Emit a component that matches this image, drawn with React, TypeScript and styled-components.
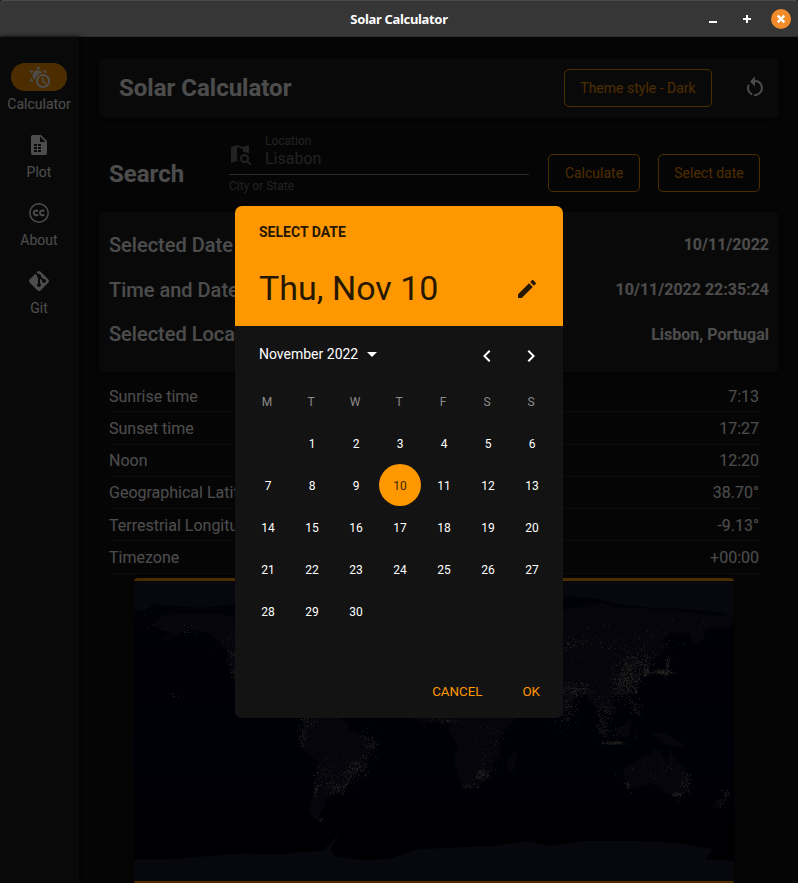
import React from "react";
import styled, { createGlobalStyle } from "styled-components";

const accent = "#ff9800";

const GlobalStyle = createGlobalStyle`
  *, *::before, *::after { box-sizing: border-box; }
  html, body { margin: 0; height: 100%; background: #121212; }
  body { overflow: hidden; font-family: Roboto, sans-serif; color: #fff; }
  button { font-family: inherit; padding: 0; background: none; border: 0; color: inherit; }
  h1, h2, p { margin: 0; }
`;

const Window = styled.div`
  width: 798px;
  height: 883px;
  display: flex;
  flex-direction: column;
  overflow: hidden;
`;

const TitleBar = styled.header`
  flex: none;
  height: 37px;
  display: grid;
  grid-template-columns: 1fr auto 1fr;
  align-items: center;
  background: #363636;
  border-top: 1px solid #4b4b4b;
  border-bottom: 1px solid #2b2b2b;
  border-radius: 3px 3px 0 0;
  padding-right: 7px;
`;

const WindowTitle = styled.span`
  grid-column: 2;
  font: 700 13px/18px "Noto Sans", sans-serif;
  letter-spacing: -0.33px;
  padding-left: 7px;
`;

const WindowControls = styled.div`
  display: flex;
  justify-content: flex-end;
  align-items: center;
  gap: 14px;
`;

const ControlButton = styled.button<{ $close?: boolean }>`
  width: 20px;
  height: 20px;
  border-radius: 50%;
  display: grid;
  place-items: center;
  background: ${(p) => (p.$close ? "#f28c2b" : "transparent")};
`;

const AppBody = styled.div`
  position: relative;
  flex: 1;
  min-height: 0;
  display: flex;
  background: #121212;
`;

const NavRail = styled.nav`
  flex: none;
  width: 79px;
  display: flex;
  flex-direction: column;
  gap: 12px;
  padding-top: 26px;
  background: #202020;
  box-shadow: 1px 0 5px rgba(0, 0, 0, 0.8);
`;

const NavItem = styled.button`
  height: 56px;
  display: flex;
  flex-direction: column;
  align-items: center;
  gap: 5px;
  padding-right: 1px;
  font-size: 14px;
  line-height: 16px;
`;

const NavPill = styled.span<{ $active?: boolean }>`
  width: 56px;
  height: 28px;
  flex: none;
  border-radius: 14px;
  display: grid;
  place-items: center;
  background: ${(p) => (p.$active ? accent : "transparent")};
`;

const Main = styled.main`
  flex: 1;
  min-width: 0;
  display: flex;
  flex-direction: column;
  padding: 21px 19px 0 20px;
`;

const Card = styled.section`
  flex: none;
  background: #202020;
  border-radius: 6px;
  box-shadow: 0 1px 8px rgba(0, 0, 0, 0.75);
`;

const HeaderCard = styled(Card)`
  height: 60px;
  display: flex;
  align-items: center;
  padding: 0 12px 0 20px;
`;

const Heading = styled.h1`
  flex: 1;
  font-size: 24px;
  line-height: 28px;
  font-weight: 700;
`;

const OutlineButton = styled.button<{ $width: number }>`
  flex: none;
  width: ${(p) => p.$width}px;
  height: 38px;
  border: 1.5px solid ${accent};
  border-radius: 5px;
  color: ${accent};
  font-size: 14px;
`;

const IconButton = styled.button<{ $margin?: string }>`
  display: grid;
  place-items: center;
  width: 24px;
  height: 24px;
  margin: ${(p) => p.$margin ?? "0"};
`;

const SearchRow = styled.section`
  flex: none;
  height: 94px;
  display: flex;
  align-items: flex-start;
  padding: 36px 19px 0 10px;
`;

const SearchTitle = styled.h2`
  width: 120px;
  font-size: 24px;
  line-height: 28px;
  margin-top: 6px;
`;

const Field = styled.div`
  width: 300px;
  height: 58px;
  margin: -20px 19px 0 0;
  color: #727272;
  font-size: 12px;
  line-height: 14px;
`;

const FieldInput = styled.div`
  display: flex;
  height: 41px;
  border-bottom: 1px solid #909090;
  margin-bottom: 4px;
`;

const FieldIcon = styled.span`
  width: 36px;
  padding-top: 8px;
`;

const FieldValue = styled.p`
  font-size: 16px;
  line-height: 19px;
  margin-top: 1px;
`;

const ButtonGroup = styled.div`
  display: flex;
  gap: 18px;
`;

const InfoCard = styled(Card)`
  height: 160px;
  padding: 10.5px 10px;
`;

const InfoRow = styled.div`
  height: 44.7px;
  display: flex;
  align-items: center;
  justify-content: space-between;
  font-size: 20px;
  font-weight: 500;
`;

const InfoValue = styled.strong`
  font-size: 16px;
  font-weight: 700;
`;

const DataList = styled.div`
  flex: none;
  height: 193.5px;
  margin: 8px 19px 0 10px;
  display: flex;
  flex-direction: column;
`;

const DataRow = styled.div`
  flex: 1;
  display: flex;
  justify-content: space-between;
  align-items: center;
  border-bottom: 1px solid #2b2b2b;
  font-size: 16px;
  padding: 1px 1px 0 0;
`;

const MapFrame = styled.div`
  flex: none;
  width: 600px;
  height: 306px;
  margin: 4.5px 0 0 35px;
  background: #00001b;
  border-top: 3px solid ${accent};
  border-bottom: 3px solid ${accent};
  border-radius: 4px;
  box-shadow: 0 1px 8px rgba(0, 0, 0, 0.6);
  overflow: hidden;

  svg { display: block; }
`;

const Scrim = styled.div`
  position: absolute;
  inset: 0;
  display: flex;
  justify-content: center;
  align-items: flex-start;
  padding-top: 169px;
  background: rgba(0, 0, 0, 0.7);
`;

const Dialog = styled.section`
  width: 328px;
  height: 512px;
  display: flex;
  flex-direction: column;
  border-radius: 7px;
  overflow: hidden;
  background: #131313;
`;

const DialogHeader = styled.header`
  flex: none;
  height: 120px;
  padding: 18px 24px 0;
  background: ${accent};
  color: #261700;
`;

const Overline = styled.p`
  font-size: 14px;
  line-height: 16px;
  font-weight: 700;
`;

const DateLine = styled.div`
  display: flex;
  align-items: center;
  justify-content: space-between;
  margin-top: 28px;
  font-size: 34px;
  line-height: 40px;
`;

const MonthBar = styled.div`
  flex: none;
  height: 54px;
  display: flex;
  align-items: flex-start;
  padding: 18px 20px 0 24px;
`;

const MonthPicker = styled.button`
  flex: 1;
  display: flex;
  align-items: center;
  gap: 9px;
  height: 20px;
  font-size: 14px;
`;

const MonthArrows = styled.div`
  display: flex;
  gap: 20px;
`;

const Week = styled.div`
  flex: none;
  height: 42px;
  display: grid;
  grid-template-columns: repeat(7, 44px);
  justify-items: center;
  align-items: center;
  padding-left: 10px;
  font-size: 12px;
`;

const WeekHeader = styled(Week)`
  color: #8b8b8b;
  padding: 2px 0 0 10px;
  width: 318px;
`;

const Day = styled.span<{ $selected?: boolean }>`
  width: 42px;
  height: 42px;
  border-radius: 50%;
  display: grid;
  place-items: center;
  padding: 2px 0 0 0;
  margin-left: 2px;
  background: ${(p) => (p.$selected ? accent : "transparent")};
  color: ${(p) => (p.$selected ? "#3d2500" : "#fff")};
`;

const Actions = styled.footer`
  flex: 1;
  display: flex;
  justify-content: flex-end;
  align-items: flex-end;
  gap: 40px;
  padding: 0 23px 19px;
  color: ${accent};
  font-size: 14px;
`;

const Icon = ({ d, size = 24 }: { d: string; size?: number }) => (
  <svg width={size} height={size} viewBox="0 0 24 24" fill="currentColor" fillRule="evenodd">
    <path d={d} />
  </svg>
);

const paths = {
  table:
    "M6 2C4.9 2 4 2.9 4 4V20C4 21.1 4.9 22 6 22H18C19.1 22 20 21.1 20 20V8L14 2ZM13 3.5L18.5 9H13ZM7 11H10V13H7ZM11 11H14V13H11ZM7 14H10V16H7ZM11 14H14V16H11ZM7 17H10V19H7ZM11 17H14V19H11Z",
  git: "M2.6,10.59L8.38,4.8L10.07,6.5C9.83,7.35 10.22,8.28 11,8.73V14.27C10.4,14.61 10,15.26 10,16A2,2 0 0,0 12,18A2,2 0 0,0 14,16C14,15.26 13.6,14.61 13,14.27V9.41L15.07,11.5C15,11.65 15,11.82 15,12A2,2 0 0,0 17,14A2,2 0 0,0 19,12A2,2 0 0,0 17,10C16.82,10 16.65,10 16.5,10.07L13.93,7.5C14.19,6.57 13.71,5.55 12.78,5.16C12.35,5 11.9,4.96 11.5,5.07L9.8,3.38L10.59,2.6C11.37,1.81 12.63,1.81 13.41,2.6L21.4,10.59C22.19,11.37 22.19,12.63 21.4,13.41L13.41,21.4C12.63,22.19 11.37,22.19 10.59,21.4L2.6,13.41C1.81,12.63 1.81,11.37 2.6,10.59Z",
  restart:
    "M12,4C14.1,4 16.1,4.8 17.6,6.3C20.7,9.4 20.7,14.5 17.6,17.6C15.8,19.5 13.3,20.2 10.9,19.9L11.4,17.9C13.1,18.1 14.9,17.5 16.2,16.2C18.5,13.9 18.5,10.1 16.2,7.7C15.1,6.6 13.5,6 12,6V10.6L7,5.6L12,0.6V4M6.3,17.6C3.7,15 3.3,11 5.1,7.9L6.6,9.4C5.5,11.6 5.9,14.4 7.8,16.2C8.3,16.7 8.9,17.1 9.6,17.4L9,19.4C8,19 7.1,18.4 6.3,17.6Z",
  pencil:
    "M20.71,7.04C21.1,6.65 21.1,6 20.71,5.63L18.37,3.29C18,2.9 17.35,2.9 16.96,3.29L15.12,5.12L18.87,8.87M3,17.25V21H6.75L17.81,9.93L14.06,6.18L3,17.25Z",
  left: "M15.41,16.58L10.83,12L15.41,7.41L14,6L8,12L14,18L15.41,16.58Z",
  right: "M8.59,16.58L13.17,12L8.59,7.41L10,6L16,12L10,18L8.59,16.58Z",
  mapSearch:
    "M15.5,12C18,12 20,14 20,16.5C20,17.38 19.75,18.21 19.31,18.9L22.39,22L21,23.39L17.88,20.32C17.19,20.75 16.37,21 15.5,21C13,21 11,19 11,16.5C11,14 13,12 15.5,12ZM15.5,14A2.5,2.5 0 0,0 13,16.5A2.5,2.5 0 0,0 15.5,19A2.5,2.5 0 0,0 18,16.5A2.5,2.5 0 0,0 15.5,14ZM2 5.4C2 5.1 2.2 5 2.4 4.9L8 3L14 5.1L19.3 3C19.7 2.9 20 3.1 20 3.5V11.8C18.8 10.7 17.3 10 15.5 10C15 10 14.5 10.1 14 10.2V7.1L8 5V16.9L9 17.3V18.9L8 18.6L2.7 21C2.3 21.1 2 20.9 2 20.5Z",
};

const SunClockIcon = () => (
  <svg width="24" height="24" viewBox="0 0 24 24" fill="#fff">
    <path d="M11.2 1L13.3 4.2H9.1ZM2.6 5.6L6.7 5.2L4.1 8.5ZM19.7 5.6L18.3 8.7L15.7 5.2ZM2.7 16.5L4.1 12.8L6.5 16.2Z" />
    <circle cx="10.7" cy="10.5" r="5.2" />
    <circle cx="16" cy="16" r="8.3" fill={accent} />
    <circle cx="16" cy="16" r="6.1" fill={accent} stroke="#fff" strokeWidth="2" />
    <path d="M15.7 12.4V16.5L19 18.3" fill="none" stroke="#fff" strokeWidth="1.6" />
  </svg>
);

const CreativeCommonsIcon = () => (
  <svg width="24" height="24" viewBox="0 0 24 24" fill="none" stroke="#fff">
    <circle cx="12" cy="12" r="9.2" strokeWidth="1.5" />
    <path d="M11 10.3A2.4 2.4 0 1 0 11 13.5M17.2 10.3A2.4 2.4 0 1 0 17.2 13.5" strokeWidth="1.9" />
  </svg>
);

/* Coastlines as longitude / latitude pairs. */
const coasts: string[] = [
  // North America, western part and Arctic
  "-168,66 -162,70 -156,71 -141,70 -128,70 -115,68 -95,72 -90,30 -110,24 -117,33 -121,35 -124,40 -124,48 -130,54 -135,59 -146,61 -152,59 -158,56 -165,54 -158,58 -165,61 -166,64",
  // South America
  "-78,9 -72,12 -62,10 -52,5 -50,0 -44,-2.5 -40,-3 -35,-6 -35,-9 -39,-14 -40,-21 -44,-23 -48,-26 -50,-30 -54,-34 -57,-36 -58,-38 -62,-39 -65,-42 -66,-46 -69,-50 -69,-53 -66,-55 -72,-53 -75,-48 -73,-40 -71,-30 -70,-18 -76,-14 -80,-7 -81,-4 -78,2",
  // Africa
  "-16,15 -13,8 -8,4.5 -2,5 5,6 9,4 9,0 12,-5 14,-11 12,-17 15,-27 18,-34 22,-34 27,-33.5 32,-28 35,-24 35,-20 40,-15 40,-8 39,-4 42,0 47,5 51,12 40,20 0,20",
  "49,-12 50,-16 47,-25 44,-24 44,-17",
  // Asia, eastern part
  "60,20 73,18 77,8 80,13 81,16 87,21 91,22 94,17 97,16 98,9 101,3 104,1.5 103,5 100,8 100,13 103,11 105,9 109,11 109,14 106,19 108,21 112,22 117,23 121,28 121,32 119,35 122,37 118,39 122,40 125,39 126,35 129,36 128,39 131,43 136,45 141,52 136,54 142,59 153,59 156,51 162,56 163,61 178,63 180,65 180,69 160,70 140,73 110,74 100,77 80,73 60,70",
  "80,9.5 82,7 80,6",
  "130,32 132,34 136,35 140,37 140,41 143,43 145,43 141,45.5 140,42 139,38 136,37 130,34",
  "95,5.5 98,4 104,-2 106,-6 102,-4",
  "105,-6.5 114,-8 108,-8",
  "109,1.5 113,3 117,7 119,5 116,-4 111,-3",
  "120,1 125,1 121,0 123,-5 120,-5",
  "120,18 122,17 122,13 126,7 122,9 120,14",
  "131,-1 138,-1.5 147,-6 151,-10 143,-9 137,-7 133,-4",
  // Australia
  "114,-22 122,-18 126,-14 130,-14.5 132,-11 137,-12 136,-15 140,-17.5 142,-11 146,-19 150,-22 153,-26 153,-31 150,-37 146,-39 140,-38 136,-35 131,-31.5 124,-33 118,-35 115,-34",
  "145,-41 148,-41 147,-43.5",
  "173,-35 178,-38 175,-41.5 174,-38",
  "172,-41 174,-42 168,-46.5 167,-45",
];

const iceSheets: string[] = [
  "-180,-77 -158,-77 -135,-75 -113,-73.5 -90,-74 -83,-73 -67,-72 -60,-65 -57,-63 -62,-70 -60,-75 -40,-78 -25,-76 -10,-71 10,-70 35,-69 55,-66 70,-69 90,-66 120,-66 145,-67 167,-71 163,-77 180,-78 180,-90 -180,-90",
  "-180,90 -180,73 -174,72 -168,76 -140,74 -120,76 -100,77 -100,90",
  "75,90 75,81 95,80 110,76 130,74 155,73 174,71 180,68 180,90",
];

const toPoints = (line: string) =>
  line
    .split(" ")
    .map((pair) => {
      const [lon, lat] = pair.split(",").map(Number);
      return `${((lon + 180) / 0.6).toFixed(1)},${((90 - lat) / 0.6).toFixed(1)}`;
    })
    .join(" ");

/* Light clusters: longitude, latitude, spread in each direction, count. */
const clusters: [number, number, number, number, number][] = [
  [-121, 45, 2, 4, 30], [-119, 35, 1.5, 2, 40], [-148, 61, 4, 1.5, 14], [-122, 53, 5, 4, 26], [-160, 65, 9, 3, 14],
  [-79, -2, 2, 5, 50], [-47, -22, 4, 3, 120], [-58, -34, 3, 2, 70], [-39, -8, 3, 5, 65], [-71, -34, 0.7, 4, 30],
  [-65, -26, 4, 5, 50], [-52, -28, 3, 3, 45], [-68, -53, 1, 0.7, 8], [-75, 5, 3, 2, 30],
  [28, -26, 2.5, 2, 75], [20, -33, 3, 1, 24], [31, -18, 5, 6, 35], [8, 6, 4, 1, 35], [37, -2, 4, 4, 20],
  [79, 16, 4, 7, 180], [85, 25, 6, 2, 130], [116, 34, 4, 5, 320], [113, 26, 5, 4, 150], [122, 42, 5, 4, 120],
  [127, 36, 1.1, 1.4, 60], [137, 35.5, 3, 0.8, 130], [140, 39, 0.7, 3, 50], [121, 24, 0.5, 1, 24],
  [108, -7, 4, 0.6, 80], [101, 14, 3, 4, 55], [101, 3, 1.4, 3, 40], [121, 14, 2, 3, 35],
  [85, 53, 10, 2, 80], [115, 52, 16, 4, 60], [145, 60, 15, 6, 24], [90, 66, 12, 4, 20],
  [151, -32, 1.5, 4, 55], [145, -38, 2, 0.7, 32], [116, -32, 0.6, 1, 14], [130, -25, 10, 6, 30],
  [175, -38, 1, 1.5, 14], [171, -43, 1.5, 1.5, 12], [-157, 21, 2, 0.7, 8], [105, -1, 5, 3, 24],
];

const buildLights = () => {
  let seed = 20221110;
  const rand = () => {
    seed = (seed * 1664525 + 1013904223) % 4294967296;
    return seed / 4294967296;
  };
  const spread = () => (rand() + rand() + rand() - 1.5) * 1.9;
  return [0, 1].map((layer) =>
    clusters
      .flatMap(([lon, lat, dx, dy, count]) =>
        Array.from({ length: Math.round(count * (layer ? 0.35 : 1)) }, () => {
          const x = (lon + spread() * dx + 180) / 0.6;
          const y = (90 - lat - spread() * dy) / 0.6;
          return `M${Math.round(x)} ${Math.round(y)}h1v1h-1z`;
        }),
      )
      .join(""),
  );
};

const [faintLights, brightLights] = buildLights();

const NightMap = () => (
  <svg width="600" height="300" viewBox="0 0 600 300">
    <defs>
      <linearGradient id="ocean" x1="0" y1="0" x2="0" y2="1">
        <stop offset="0" stopColor="#07071f" />
        <stop offset="0.3" stopColor="#000015" />
        <stop offset="0.6" stopColor="#00001c" />
        <stop offset="0.85" stopColor="#00000a" />
      </linearGradient>
    </defs>
    <rect width="600" height="300" fill="url(#ocean)" />
    {coasts.map((c) => (
      <polygon key={c} points={toPoints(c)} fill="#111127" stroke="#0c0c21" strokeLinejoin="round" />
    ))}
    {iceSheets.map((c) => (
      <polygon key={c} points={toPoints(c)} fill="#191931" />
    ))}
    <path d={faintLights} fill="#565652" opacity="0.65" />
    <path d={brightLights} fill="#8f8b78" opacity="0.75" />
  </svg>
);

const navItems = [
  { label: "Calculator", icon: <SunClockIcon />, active: true },
  { label: "Plot", icon: <Icon d={paths.table} /> },
  { label: "About", icon: <CreativeCommonsIcon /> },
  { label: "Git", icon: <Icon d={paths.git} /> },
];

const info = [
  ["Selected Date", "10/11/2022"],
  ["Time and Date", "10/11/2022 22:35:24"],
  ["Selected Location", "Lisbon, Portugal"],
];

const data = [
  ["Sunrise time", "7:13"],
  ["Sunset time", "17:27"],
  ["Noon", "12:20"],
  ["Geographical Latitude", "38.70°"],
  ["Terrestrial Longitude", "-9.13°"],
  ["Timezone", "+00:00"],
];

const weeks = Array.from({ length: 5 }, (_, w) =>
  Array.from({ length: 7 }, (_, d) => w * 7 + d).map((n) => (n > 0 && n <= 30 ? n : null)),
);

export default function App() {
  return (
    <Window>
      <GlobalStyle />
      <TitleBar>
        <WindowTitle>Solar Calculator</WindowTitle>
        <WindowControls>
          <ControlButton aria-label="Minimize">
            <svg width="20" height="20"><path d="M6 12h8v2H6z" fill="#fff" /></svg>
          </ControlButton>
          <ControlButton aria-label="Maximize">
            <svg width="20" height="20"><path d="M9 6h2v3h3v2h-3v3H9v-3H6V9h3z" fill="#fff" /></svg>
          </ControlButton>
          <ControlButton $close aria-label="Close">
            <svg width="20" height="20"><path d="M6.7 6.7l6.6 6.6M13.3 6.7l-6.6 6.6" stroke="#fff" strokeWidth="2.4" /></svg>
          </ControlButton>
        </WindowControls>
      </TitleBar>
      <AppBody>
        <NavRail>
          {navItems.map((item) => (
            <NavItem key={item.label}>
              <NavPill $active={item.active}>{item.icon}</NavPill>
              {item.label}
            </NavItem>
          ))}
        </NavRail>
        <Main>
          <HeaderCard>
            <Heading>Solar Calculator</Heading>
            <OutlineButton $width={148}>Theme style - Dark</OutlineButton>
            <IconButton $margin="0 0 0 31px" aria-label="Reset">
              <Icon d={paths.restart} />
            </IconButton>
          </HeaderCard>
          <SearchRow>
            <SearchTitle>Search</SearchTitle>
            <Field>
              <FieldInput>
                <FieldIcon><Icon d={paths.mapSearch} /></FieldIcon>
                <div>
                  <p>Location</p>
                  <FieldValue>Lisabon</FieldValue>
                </div>
              </FieldInput>
              <p>City or State</p>
            </Field>
            <ButtonGroup>
              <OutlineButton $width={92}>Calculate</OutlineButton>
              <OutlineButton $width={102}>Select date</OutlineButton>
            </ButtonGroup>
          </SearchRow>
          <InfoCard>
            {info.map(([label, value]) => (
              <InfoRow key={label}>
                <span>{label}</span>
                <InfoValue>{value}</InfoValue>
              </InfoRow>
            ))}
          </InfoCard>
          <DataList>
            {data.map(([label, value]) => (
              <DataRow key={label}>
                <span>{label}</span>
                <span>{value}</span>
              </DataRow>
            ))}
          </DataList>
          <MapFrame>
            <NightMap />
          </MapFrame>
        </Main>
        <Scrim>
          <Dialog role="dialog" aria-label="Select date">
            <DialogHeader>
              <Overline>SELECT DATE</Overline>
              <DateLine>
                Thu, Nov 10
                <IconButton $margin="2px 0 0" aria-label="Edit">
                  <Icon d={paths.pencil} />
                </IconButton>
              </DateLine>
            </DialogHeader>
            <MonthBar>
              <MonthPicker>
                November 2022
                <svg width="10" height="5"><path d="M0 0h10L5 5z" fill="#fff" /></svg>
              </MonthPicker>
              <MonthArrows>
                <IconButton aria-label="Previous month"><Icon d={paths.left} /></IconButton>
                <IconButton aria-label="Next month"><Icon d={paths.right} /></IconButton>
              </MonthArrows>
            </MonthBar>
            <WeekHeader>
              {["M", "T", "W", "T", "F", "S", "S"].map((d, i) => (
                <span key={i}>{d}</span>
              ))}
            </WeekHeader>
            {weeks.map((week, w) => (
              <Week key={w}>
                {week.map((n, i) => (
                  <Day key={i} $selected={n === 10}>{n}</Day>
                ))}
              </Week>
            ))}
            <Actions>
              <button>CANCEL</button>
              <button>OK</button>
            </Actions>
          </Dialog>
        </Scrim>
      </AppBody>
    </Window>
  );
}
